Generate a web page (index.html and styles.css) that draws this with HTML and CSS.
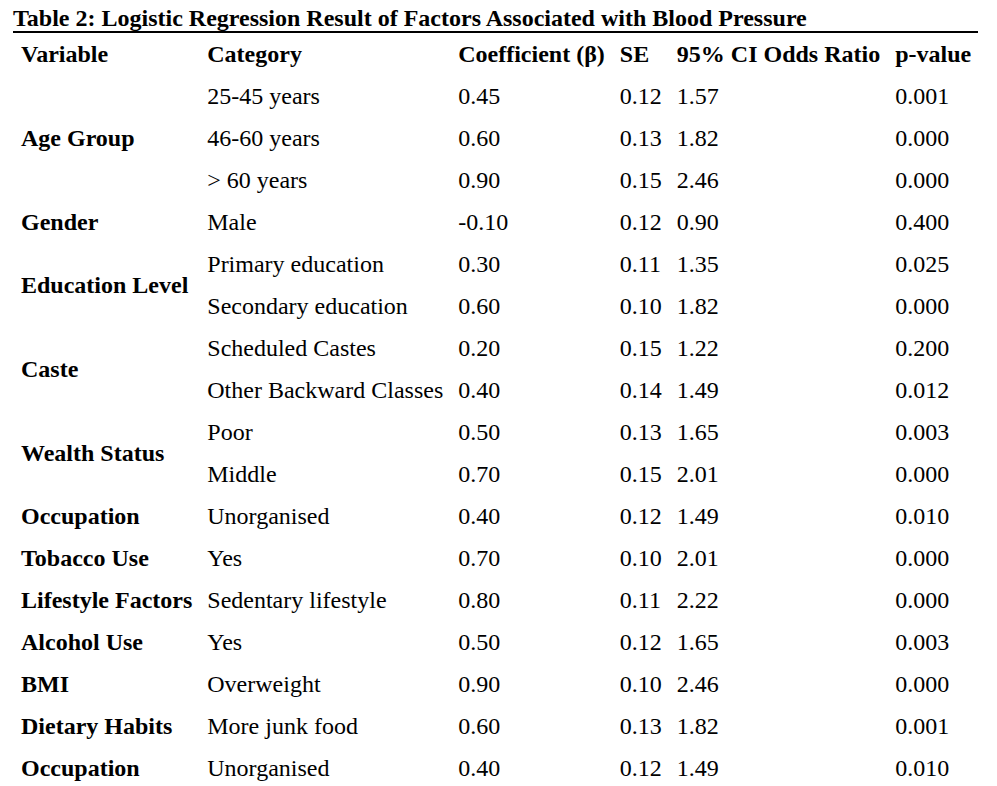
FILE: index.html
```html
<!DOCTYPE html>
<html lang="en">
<head>
<meta charset="utf-8">
<title>Table 2</title>
<link rel="stylesheet" href="styles.css">
</head>
<body>
<div class="wrap">
  <h1 class="caption">Table 2: Logistic Regression Result of Factors Associated with Blood Pressure</h1>
  <table class="results">
    <thead>
      <tr><th>Variable</th><th>Category</th><th>Coefficient (β)</th><th>SE</th><th>95% CI Odds Ratio</th><th>p-value</th></tr>
    </thead>
    <tbody>
      <tr><td class="var" rowspan="3">Age Group</td><td>25-45 years</td><td>0.45</td><td>0.12</td><td>1.57</td><td>0.001</td></tr>
      <tr><td>46-60 years</td><td>0.60</td><td>0.13</td><td>1.82</td><td>0.000</td></tr>
      <tr><td>&gt; 60 years</td><td>0.90</td><td>0.15</td><td>2.46</td><td>0.000</td></tr>
      <tr><td class="var">Gender</td><td>Male</td><td>-0.10</td><td>0.12</td><td>0.90</td><td>0.400</td></tr>
      <tr><td class="var" rowspan="2">Education Level</td><td>Primary education</td><td>0.30</td><td>0.11</td><td>1.35</td><td>0.025</td></tr>
      <tr><td>Secondary education</td><td>0.60</td><td>0.10</td><td>1.82</td><td>0.000</td></tr>
      <tr><td class="var" rowspan="2">Caste</td><td>Scheduled Castes</td><td>0.20</td><td>0.15</td><td>1.22</td><td>0.200</td></tr>
      <tr><td>Other Backward Classes</td><td>0.40</td><td>0.14</td><td>1.49</td><td>0.012</td></tr>
      <tr><td class="var" rowspan="2">Wealth Status</td><td>Poor</td><td>0.50</td><td>0.13</td><td>1.65</td><td>0.003</td></tr>
      <tr><td>Middle</td><td>0.70</td><td>0.15</td><td>2.01</td><td>0.000</td></tr>
      <tr><td class="var">Occupation</td><td>Unorganised</td><td>0.40</td><td>0.12</td><td>1.49</td><td>0.010</td></tr>
      <tr><td class="var">Tobacco Use</td><td>Yes</td><td>0.70</td><td>0.10</td><td>2.01</td><td>0.000</td></tr>
      <tr><td class="var">Lifestyle Factors</td><td>Sedentary lifestyle</td><td>0.80</td><td>0.11</td><td>2.22</td><td>0.000</td></tr>
      <tr><td class="var">Alcohol Use</td><td>Yes</td><td>0.50</td><td>0.12</td><td>1.65</td><td>0.003</td></tr>
      <tr><td class="var">BMI</td><td>Overweight</td><td>0.90</td><td>0.10</td><td>2.46</td><td>0.000</td></tr>
      <tr><td class="var">Dietary Habits</td><td>More junk food</td><td>0.60</td><td>0.13</td><td>1.82</td><td>0.001</td></tr>
      <tr><td class="var">Occupation</td><td>Unorganised</td><td>0.40</td><td>0.12</td><td>1.49</td><td>0.010</td></tr>
    </tbody>
  </table>
</div>
</body>
</html>
```
FILE: styles.css
```css
html, body {
  margin: 0;
  padding: 0;
  background: #ffffff;
}
body {
  font-family: "Liberation Serif", "Times New Roman", serif;
  color: #000000;
}
.wrap {
  display: inline-block;
  padding: 0 0 0 13px;
}
.caption {
  margin: 0;
  padding-top: 5px;
  font-size: 24px;
  line-height: 26px;
  font-weight: bold;
  border-bottom: 2px solid #000000;
  white-space: nowrap;
}
.results {
  border-collapse: collapse;
  font-size: 24px;
}
.results th,
.results td {
  padding: 7px 7px 7px 8px;
  line-height: 28px;
  text-align: left;
  vertical-align: middle;
  white-space: nowrap;
}
.results th {
  font-weight: bold;
}
.results td.var {
  font-weight: bold;
}
```
